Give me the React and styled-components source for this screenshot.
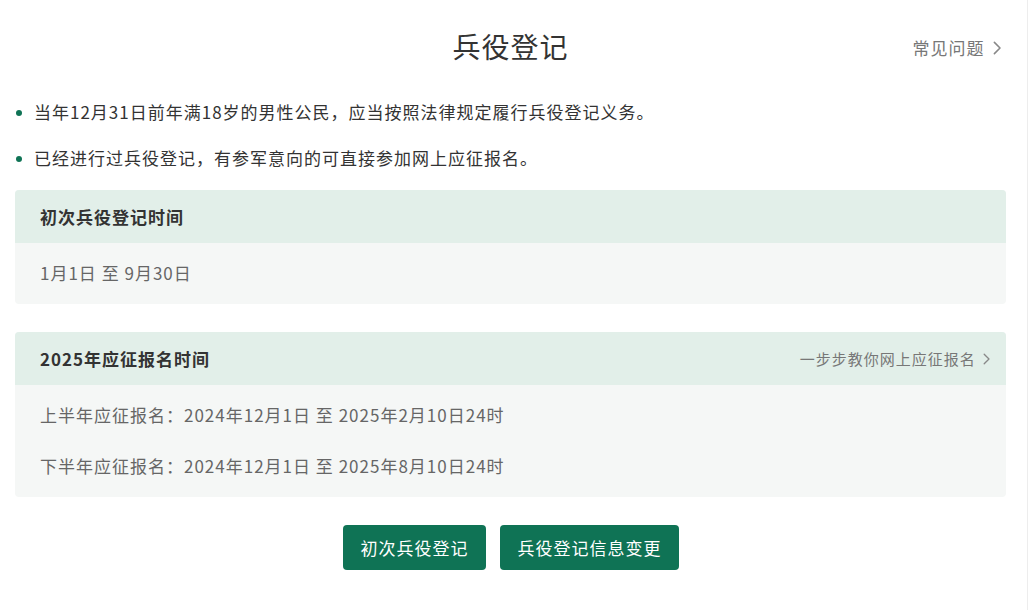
import styled, { createGlobalStyle } from "styled-components";

const GlobalStyle = createGlobalStyle`
  * { box-sizing: border-box; }
  body {
    margin: 0;
    background: #fff;
    font-family: "Noto Sans CJK SC", "Noto Sans", sans-serif;
    color: #333;
  }
`;

const Chevron = ({ size = 14 }) => (
  <svg width={size * 0.6} height={size} viewBox="0 0 6 10" fill="none">
    <path d="M1 1l4 4-4 4" stroke="#888" strokeWidth="1.1" strokeLinecap="round" strokeLinejoin="round" />
  </svg>
);

export default function App() {
  return (
    <>
      <GlobalStyle />
      <Page>
        <Header>
          <Title>兵役登记</Title>
          <FaqLink>
            常见问题 <Chevron size={14} />
          </FaqLink>
        </Header>

        <Notes>
          <Note>当年12月31日前年满18岁的男性公民，应当按照法律规定履行兵役登记义务。</Note>
          <Note>已经进行过兵役登记，有参军意向的可直接参加网上应征报名。</Note>
        </Notes>

        <Card>
          <CardHead>
            <CardTitle>初次兵役登记时间</CardTitle>
          </CardHead>
          <CardBody>
            <Row>1月1日 至 9月30日</Row>
          </CardBody>
        </Card>

        <Card $gap>
          <CardHead>
            <CardTitle>2025年应征报名时间</CardTitle>
            <GuideLink>
              一步步教你网上应征报名 <Chevron size={12} />
            </GuideLink>
          </CardHead>
          <CardBody>
            <Row>上半年应征报名：2024年12月1日 至 2025年2月10日24时</Row>
            <Row>下半年应征报名：2024年12月1日 至 2025年8月10日24时</Row>
          </CardBody>
        </Card>

        <Actions>
          <Button>初次兵役登记</Button>
          <Button>兵役登记信息变更</Button>
        </Actions>
      </Page>
    </>
  );
}

const Page = styled.div`
  width: 1028px;
  min-height: 610px;
  padding: 0 21px 0 15px;
  border-right: 1px solid #ededed;
`;

const Header = styled.header`
  position: relative;
  height: 92px;
  display: flex;
  align-items: center;
  justify-content: center;
`;

const Title = styled.h1`
  margin: 0;
  font-size: 28px;
  font-weight: 400;
  color: #333;
  letter-spacing: 1px;
`;

const FaqLink = styled.a`
  position: absolute;
  right: 5px;
  top: 35px;
  display: flex;
  align-items: center;
  gap: 8px;
  font-size: 17px;
  letter-spacing: 1px;
  color: #777;
  cursor: pointer;
`;

const Notes = styled.ul`
  list-style: none;
  margin: 0;
  padding: 9px 0 21px;
  display: flex;
  flex-direction: column;
  gap: 24px;
`;

const Note = styled.li`
  position: relative;
  padding-left: 19px;
  font-size: 17px;
  letter-spacing: 1px;
  line-height: 22px;
  color: #333;

  &::before {
    content: "";
    position: absolute;
    left: 1px;
    top: 9px;
    width: 6px;
    height: 6px;
    border-radius: 50%;
    background: #0f7355;
  }
`;

const Card = styled.section`
  margin-top: ${(p) => (p.$gap ? "28px" : "0")};
  border-radius: 4px;
  overflow: hidden;
  background: #f5f7f6;
`;

const CardHead = styled.div`
  height: 53px;
  padding: 0 16px 0 25px;
  display: flex;
  align-items: center;
  justify-content: space-between;
  background: #e2efe9;
`;

const CardTitle = styled.h2`
  margin: 0;
  font-size: 17px;
  letter-spacing: 1px;
  font-weight: 700;
  color: #333;
`;

const GuideLink = styled.a`
  display: flex;
  align-items: center;
  gap: 7px;
  font-size: 15px;
  letter-spacing: 1px;
  color: #777;
  cursor: pointer;
`;

const CardBody = styled.div`
  padding: 19px 25px 20px;
  display: flex;
  flex-direction: column;
  gap: 29px;
`;

const Row = styled.div`
  font-size: 17px;
  letter-spacing: 1px;
  line-height: 22px;
  color: #666;
`;

const Actions = styled.div`
  padding-top: 28px;
  display: flex;
  justify-content: center;
  gap: 14px;
`;

const Button = styled.button`
  height: 45px;
  padding: 0 17px 0 18px;
  border: none;
  border-radius: 4px;
  background: #0f7355;
  color: #fff;
  font-family: "Noto Sans CJK SC", "Noto Sans", sans-serif;
  font-size: 17px;
  letter-spacing: 1px;
  cursor: pointer;
`;
